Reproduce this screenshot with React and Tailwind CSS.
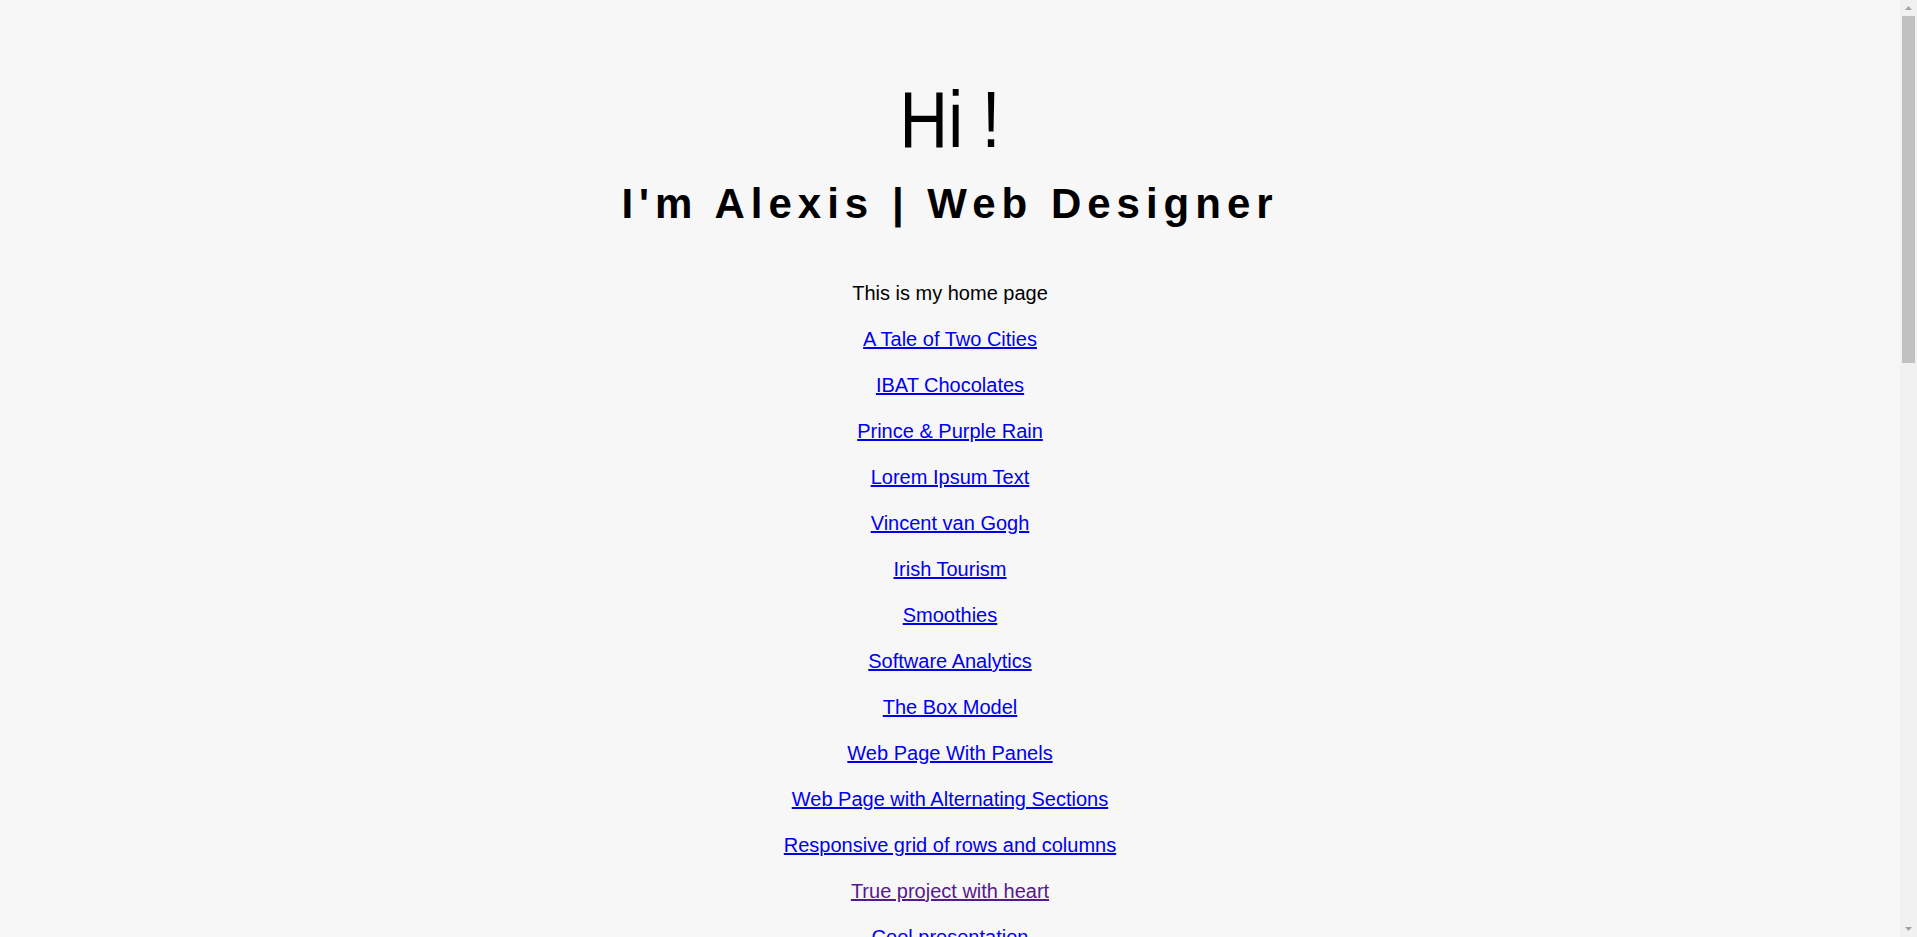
import React from "react";

const links = [
  { title: "A Tale of Two Cities" },
  { title: "IBAT Chocolates" },
  { title: "Prince & Purple Rain" },
  { title: "Lorem Ipsum Text" },
  { title: "Vincent van Gogh" },
  { title: "Irish Tourism" },
  { title: "Smoothies" },
  { title: "Software Analytics" },
  { title: "The Box Model" },
  { title: "Web Page With Panels" },
  { title: "Web Page with Alternating Sections" },
  { title: "Responsive grid of rows and columns" },
  { title: "True project with heart", visited: true },
  { title: "Cool presentation" },
];

// window scrollbar, drawn since the page is cut at the viewport
const Scrollbar = () => (
  <div className="w-[17px] shrink-0 h-full bg-[#f1f1f1] flex flex-col items-center">
    <div className="h-[16px] w-full flex items-center justify-center">
      <svg width="7" height="4" viewBox="0 0 7 4">
        <polygon points="3.5,0 7,4 0,4" fill="#a3a3a3" />
      </svg>
    </div>
    <div className="w-[13px] h-[347px] bg-[#c1c1c1]" />
    <div className="flex-1" />
    <div className="h-[16px] w-full flex items-center justify-center">
      <svg width="7" height="4" viewBox="0 0 7 4">
        <polygon points="0,0 7,0 3.5,4" fill="#a3a3a3" />
      </svg>
    </div>
  </div>
);

const App = () => {
  return (
    <div className="h-screen flex overflow-hidden bg-[#f7f7f7] text-black font-['Liberation_Sans',Arial,sans-serif]">
      <main className="flex-1 overflow-hidden text-center pt-[80px] pb-[20px]">
        <h1 className="text-[80px] leading-[80px] font-normal">
          <span className="inline-block scale-x-[0.84]">Hi !</span>
        </h1>
        <h2 className="mt-[23px] text-[42px] leading-[42px] font-bold tracking-[6px]">
          I'm Alexis | Web Designer
        </h2>

        <div className="mt-[55px] flex flex-col items-center gap-[20px] text-[20px] leading-[26px]">
          <p>This is my home page</p>
          {links.map((link, index) => (
            <p key={index}>
              <a
                href="#"
                className={
                  link.visited
                    ? "underline text-[#551a8b]"
                    : "underline text-[#0000ee]"
                }
              >
                {link.title}
              </a>
            </p>
          ))}
        </div>
      </main>
      <Scrollbar />
    </div>
  );
};

export default App;
